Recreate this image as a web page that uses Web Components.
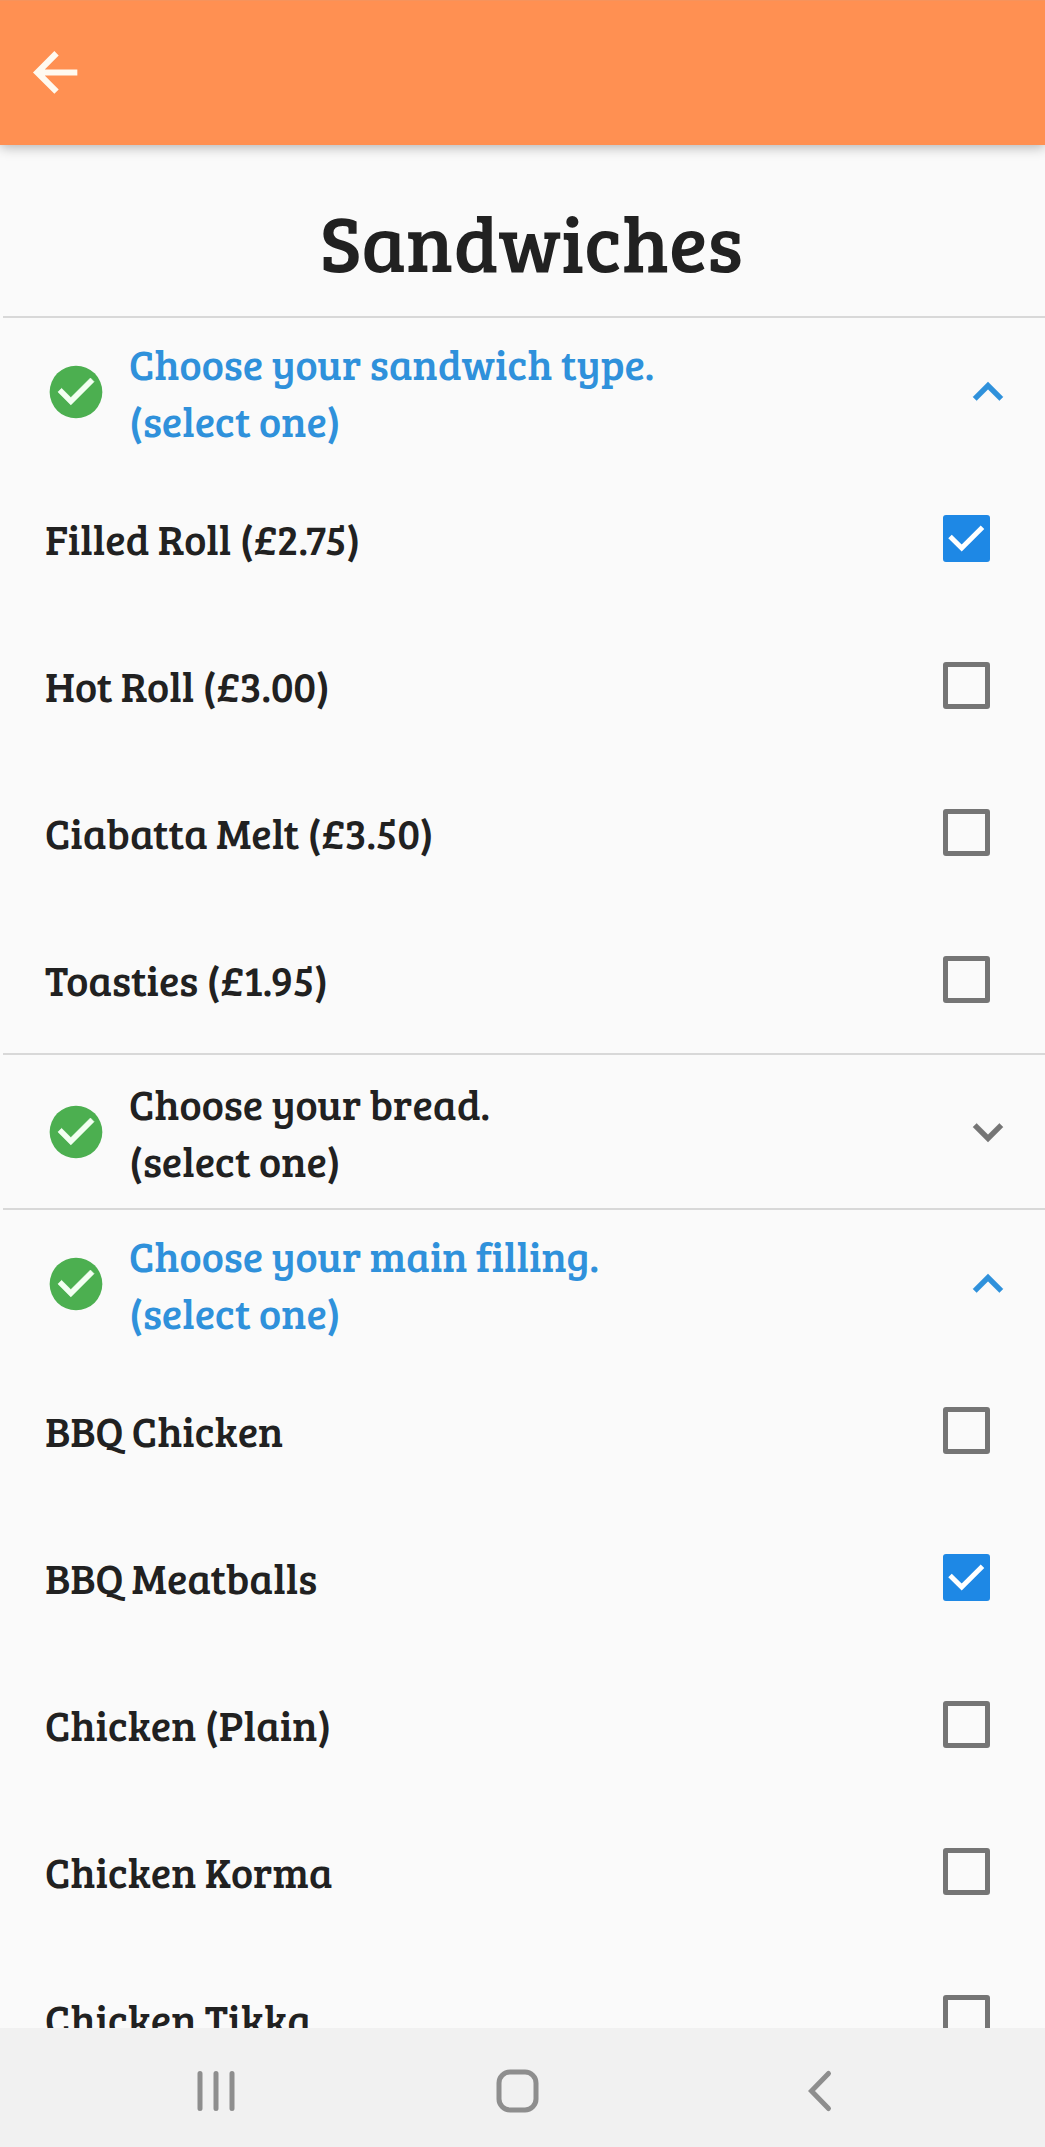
<!DOCTYPE html>
<html lang="en">
<head>
<meta charset="utf-8">
<meta name="viewport" content="width=device-width, initial-scale=1">
<title>Sandwiches</title>
<style>
  :root {
    --ink: #212121;
    --accent: #2f91db;
    --grey: #757575;
    --line: #d8d8d8;
    --row: 147px;
  }
  body {
    margin: 0;
    background: #fafafa;
    color: var(--ink);
    font-family: "Bree Serif", "DejaVu Serif Condensed", "DejaVu Serif", serif;
    font-size: 42px;
    line-height: 57px;
  }
</style>
</head>
<body>
<order-screen>
  <app-bar slot="top"></app-bar>
  <page-title>Sandwiches</page-title>
  <choice-section open>
    <span slot="title">Choose your sandwich type.</span>
    <span slot="hint">(select one)</span>
    <choice-option checked>Filled Roll (£2.75)</choice-option>
    <choice-option>Hot Roll (£3.00)</choice-option>
    <choice-option>Ciabatta Melt (£3.50)</choice-option>
    <choice-option>Toasties (£1.95)</choice-option>
  </choice-section>
  <choice-section>
    <span slot="title">Choose your bread.</span>
    <span slot="hint">(select one)</span>
  </choice-section>
  <choice-section open>
    <span slot="title">Choose your main filling.</span>
    <span slot="hint">(select one)</span>
    <choice-option>BBQ Chicken</choice-option>
    <choice-option checked>BBQ Meatballs</choice-option>
    <choice-option>Chicken (Plain)</choice-option>
    <choice-option>Chicken Korma</choice-option>
    <choice-option>Chicken Tikka</choice-option>
  </choice-section>
  <system-nav slot="bottom"></system-nav>
</order-screen>

<script>
  const define = (name, html, setup) => {
    const template = document.createElement('template');
    template.innerHTML = html;
    customElements.define(name, class extends HTMLElement {
      constructor() {
        super();
        this.attachShadow({ mode: 'open' }).append(template.content.cloneNode(true));
      }
      connectedCallback() {
        if (setup) setup(this, this.shadowRoot);
      }
    });
  };

  define('order-screen', `
    <style>
      :host { display: flex; flex-direction: column; height: 100vh; }
      main { flex: 1; min-height: 0; overflow-y: auto; scrollbar-width: none; }
    </style>
    <slot name="top"></slot>
    <main><slot></slot></main>
    <slot name="bottom"></slot>`);

  define('app-bar', `
    <style>
      :host { display: block; position: relative; z-index: 1; background: #ff9052; box-shadow: 0 2px 12px rgba(0, 0, 0, .3); }
      header { display: flex; align-items: center; height: 145px; padding: 0 24px; box-sizing: border-box; border-top: 1px solid #f6935c; }
      button { display: flex; padding: 0; border: 0; background: none; color: #fffaf0; }
      svg { width: 64px; height: 64px; }
    </style>
    <header>
      <button type="button" aria-label="Back">
        <svg viewBox="0 0 24 24" fill="none" stroke="currentColor" stroke-width="2.3"><path d="M20 11.800H5.600M12.200 4.600L5 11.800L12.200 19"/></svg>
      </button>
    </header>`);

  define('page-title', `
    <style>
      :host { display: block; padding: 46px 0 25px 18px; }
      h1 { margin: 0; font-size: 79px; line-height: 100px; font-weight: 400; text-align: center; }
    </style>
    <h1><slot></slot></h1>`);

  define('choice-section', `
    <style>
      :host { display: block; }
      hr { margin: 0 0 0 3px; border: 0; height: 2px; background: var(--line); }
      button {
        display: flex; align-items: center; gap: 22px; box-sizing: border-box;
        width: 100%; min-height: 153px; padding: 0 26px 0 45px; border: 0;
        background: none; color: inherit; font: inherit; text-align: left;
      }
      svg { flex: none; width: 62px; height: 62px; }
      .text { flex: 1; }
      ::slotted([slot]) { display: block; }
      .chevron { color: var(--grey); }
      .options { display: none; }
      :host([open]) .options { display: block; }
      :host([open]) button { min-height: var(--row); color: var(--accent); }
      :host([open]) .chevron { color: var(--accent); transform: rotate(180deg); }
    </style>
    <hr>
    <button type="button" aria-expanded="false">
      <svg viewBox="0 0 24 24" aria-hidden="true">
        <circle cx="12" cy="12" r="10.200" fill="#4caf50"/>
        <path fill="#f3fff2" stroke="#f3fff2" stroke-width=".2" d="M10 17l-5-5 1.41-1.41L10 14.17l7.59-7.59L19 8z"/>
      </svg>
      <span class="text"><slot name="title"></slot><slot name="hint"></slot></span>
      <svg class="chevron" viewBox="0 0 24 24" aria-hidden="true"><path fill="currentColor" stroke="currentColor" stroke-width=".2" d="M16.400 8.700L12 13.100 7.600 8.700 6.200 10.100l5.800 5.800 5.800-5.800z"/></svg>
    </button>
    <div class="options"><slot></slot></div>`,
    (host, root) => {
      const button = root.querySelector('button');
      button.setAttribute('aria-expanded', host.hasAttribute('open'));
      button.onclick = () => button.setAttribute('aria-expanded', host.toggleAttribute('open'));
    });

  define('choice-option', `
    <style>
      :host { display: block; }
      label { display: flex; align-items: center; justify-content: space-between; min-height: var(--row); padding: 0 55px 0 45px; }
      .box { display: grid; flex: none; }
      .box > * { grid-area: 1 / 1; width: 47px; height: 47px; }
      input { appearance: none; margin: 0; box-sizing: border-box; border: 5px solid var(--grey); border-radius: 3px; }
      input:checked { border-color: #1e88e5; background: #1e88e5; }
      svg { visibility: hidden; pointer-events: none; }
      input:checked + svg { visibility: visible; }
    </style>
    <label for="pick">
      <span class="text"><slot></slot></span>
      <span class="box">
        <input id="pick" type="checkbox">
        <svg viewBox="0 0 47 47" fill="none" stroke="#fff" stroke-width="5" aria-hidden="true"><path d="M7 21.500L18.700 33L39.500 12.300"/></svg>
      </span>
    </label>`,
    (host, root) => { root.querySelector('input').checked = host.hasAttribute('checked'); });

  define('system-nav', `
    <style>
      :host { display: block; background: #f1f1f1; }
      nav { display: grid; grid-template-columns: repeat(3, 1fr); place-items: center; height: 119px; box-sizing: border-box; padding: 7px 74px 0 65px; }
      button { display: flex; padding: 0; border: 0; background: none; color: #8e8e8e; }
      svg { width: 48px; height: 48px; fill: none; stroke: currentColor; stroke-width: 5; stroke-linecap: round; }
    </style>
    <nav aria-label="System">
      <button type="button" aria-label="Recent apps"><svg viewBox="0 0 48 48"><path d="M8 6.500V41.500M24 6.500V41.500M40 6.500V41.500"/></svg></button>
      <button type="button" aria-label="Home"><svg viewBox="0 0 48 48"><rect x="5" y="5" width="37" height="38" rx="11"/></svg></button>
      <button type="button" aria-label="Back"><svg viewBox="0 0 48 48"><path d="M32.500 6.500L15.500 24L32.500 41.500"/></svg></button>
    </nav>`);
</script>
</body>
</html>
